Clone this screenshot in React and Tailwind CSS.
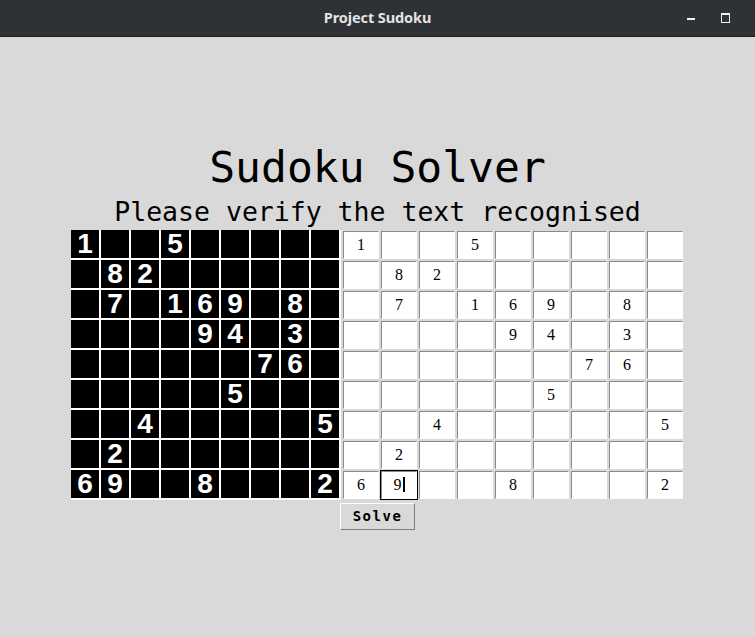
import React from 'react';

const board = [
  [1, 0, 0, 5, 0, 0, 0, 0, 0],
  [0, 8, 2, 0, 0, 0, 0, 0, 0],
  [0, 7, 0, 1, 6, 9, 0, 8, 0],
  [0, 0, 0, 0, 9, 4, 0, 3, 0],
  [0, 0, 0, 0, 0, 0, 7, 6, 0],
  [0, 0, 0, 0, 0, 5, 0, 0, 0],
  [0, 0, 4, 0, 0, 0, 0, 0, 5],
  [0, 2, 0, 0, 0, 0, 0, 0, 0],
  [6, 9, 0, 0, 8, 0, 0, 0, 2],
];

function TitleBar() {
  return (
    <div className="relative h-[37px] bg-[#2e3236] border-b border-[#1b1d1f] flex items-center justify-center">
      <span className="text-[14.5px] font-bold text-[#e4e4e4] font-['Noto_Sans',sans-serif] tracking-[-0.1px]">
        Project Sudoku
      </span>
      <div className="absolute right-0 top-0 h-full flex items-center">
        <div className="w-[8px] h-[2px] bg-[#f2f2f2] mr-[26px] mt-[2px]" />
        <div className="w-[9px] h-[10px] border border-t-2 border-[#f2f2f2] mr-[25px]" />
      </div>
    </div>
  );
}

// the scanned picture: black squares, white lines
function ScannedGrid() {
  return (
    <div className="grid grid-cols-9 w-[270px] h-[270px]">
      {board.flat().map((n, i) => (
        <div
          key={i}
          className="w-[30px] h-[30px] bg-black border-r-2 border-b-2 border-white flex items-center justify-center"
        >
          {n > 0 && (
            <span className="text-white font-bold text-[28px] leading-none font-['Liberation_Sans',Arial,sans-serif]">
              {n}
            </span>
          )}
        </div>
      ))}
    </div>
  );
}

function Cell({ value, focused }) {
  return (
    <div className={`w-[38px] h-[30px] border ${focused ? 'border-black' : 'border-[#d9d9d9]'}`}>
      <div className="w-full h-full bg-white border-t border-l border-[#8a8a8a] border-b border-r border-b-white border-r-white flex items-center justify-center">
        <span className="text-[16px] leading-none text-black font-['Liberation_Serif',serif]">
          {value > 0 ? value : ''}
        </span>
        {focused && <span className="w-[2px] h-[15px] bg-black ml-[1px]" />}
      </div>
    </div>
  );
}

function EntryGrid() {
  return (
    <div className="grid grid-cols-9 w-[342px]">
      {board.map((row, r) =>
        row.map((n, c) => <Cell key={`${r}-${c}`} value={n} focused={r === 8 && c === 1} />)
      )}
    </div>
  );
}

export default function App() {
  return (
    <div className="w-[755px] h-[637px] bg-[#d9d9d9] flex flex-col overflow-hidden">
      <TitleBar />
      <div className="flex flex-col items-center pt-[109px]">
        <h1 className="text-[43px] leading-none text-black font-['DejaVu_Sans_Mono',monospace]">
          Sudoku Solver
        </h1>
        <p className="mt-[10px] text-[26.5px] leading-none text-black font-['DejaVu_Sans_Mono',monospace]">
          Please verify the text recognised
        </p>
        <div className="mt-[4px] grid grid-cols-[270px_342px] gap-x-px">
          <ScannedGrid />
          <EntryGrid />
          <div />
          <button className="justify-self-start -ml-[2px] mt-[3px] w-[75px] h-[27px] bg-[#d9d9d9] border border-t-white border-l-white border-b-[#7c7c7c] border-r-[#7c7c7c] text-[14px] font-bold tracking-[1.5px] text-black font-['DejaVu_Sans_Mono',monospace]">
            Solve
          </button>
        </div>
      </div>
    </div>
  );
}
